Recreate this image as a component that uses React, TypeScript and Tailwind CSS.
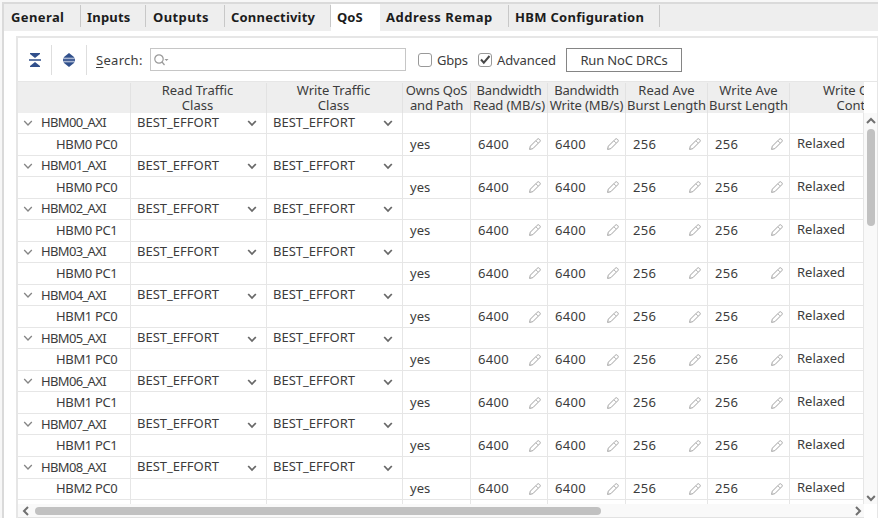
import React from "react";

const COLS = "grid grid-cols-[113px_136px_136px_68px_77px_78px_82px_82px_74px]";

const tabs = [
  { label: "General", cls: "w-[77px] pl-[7px] tracking-[0.4px]" },
  { label: "Inputs", cls: "w-[65px] pl-[6px] tracking-[0.2px]" },
  { label: "Outputs", cls: "w-[79px] pl-[7px] tracking-[0.4px]" },
  { label: "Connectivity", cls: "w-[106px] pl-[6px] tracking-[0.2px]" },
  { label: "QoS", cls: "w-[49px] pl-[6px]", active: true },
  { label: "Address Remap", cls: "w-[129px] pl-[6px] tracking-[0.5px]" },
  { label: "HBM Configuration", cls: "w-[151px] pl-[6px] tracking-[0.3px]" },
];

const groups = [
  ["HBM00_AXI", "HBM0 PC0"],
  ["HBM01_AXI", "HBM0 PC0"],
  ["HBM02_AXI", "HBM0 PC1"],
  ["HBM03_AXI", "HBM0 PC1"],
  ["HBM04_AXI", "HBM1 PC0"],
  ["HBM05_AXI", "HBM1 PC0"],
  ["HBM06_AXI", "HBM1 PC1"],
  ["HBM07_AXI", "HBM1 PC1"],
  ["HBM08_AXI", "HBM2 PC0"],
];

const headers = [
  { top: "", bottom: "", cls: "" },
  { top: "Read Traffic", bottom: "Class", cls: "pr-[2px]" },
  { top: "Write Traffic", bottom: "Class", cls: "pr-[2px]" },
  { top: "Owns QoS", bottom: "and Path", cls: "tracking-[-0.2px]" },
  { top: "Bandwidth", bottom: "Read (MB/s)", cls: "tracking-[-0.1px]" },
  { top: "Bandwidth", bottom: "Write (MB/s)", cls: "tracking-[-0.15px]" },
  { top: "Read Ave", bottom: "Burst Length", cls: "" },
  { top: "Write Ave", bottom: "Burst Length", cls: "" },
];

function Chevron({ className, d = "M1.2 3l3.8 4 3.8-4", w = 2 }: { className: string; d?: string; w?: number }) {
  return (
    <svg viewBox="0 0 10 10" className={`h-[10px] w-[10px] shrink-0 ${className}`} fill="none" stroke="currentColor" strokeWidth={w}>
      <path d={d} />
    </svg>
  );
}

function Pencil() {
  return (
    <svg viewBox="0 0 12 12" className="h-[12px] w-[12px] shrink-0 text-[#a0a0a0]" fill="none" stroke="currentColor" strokeWidth="1" strokeLinejoin="round">
      <path d="M.6 11.4l.7-3.2 6.9-6.9c.7-.7 1.5-.7 2.1-.1l.5.5c.6.6.6 1.4-.1 2.1L3.8 10.7z M7.3 3.2l1.5 1.5" />
    </svg>
  );
}

const cell = "flex items-center border-r border-b border-[#e6e6e6] min-w-0";

function Editable({ value }: { value: string }) {
  return (
    <div className={`${cell} justify-between pl-[7px] pr-[6px]`}>
      <span className="tracking-[0.3px]">{value}</span>
      <Pencil />
    </div>
  );
}

function Traffic() {
  return (
    <div className={`${cell} justify-between pl-[6px] pr-[9px]`}>
      <span className="-mt-[1px]">BEST_EFFORT</span>
      <Chevron className="mt-[1px] text-[#686868]" w={1.8} />
    </div>
  );
}

function Group({ name, child }: { name: string; child: string }) {
  return (
    <>
      <div className={`${COLS} h-[21.54px]`}>
        <div className={`${cell} pl-[5px]`}>
          <Chevron className="text-[#858585]" w={1.3} />
          <span className="ml-[8px] tracking-[-0.65px]">{name}</span>
        </div>
        <Traffic />
        <Traffic />
        <div className={cell} />
        <div className={cell} />
        <div className={cell} />
        <div className={cell} />
        <div className={cell} />
        <div className={cell} />
      </div>
      <div className={`${COLS} h-[21.54px]`}>
        <div className={`${cell} pl-[38px]`}>
          <span className="tracking-[-0.35px]">{child}</span>
        </div>
        <div className={cell} />
        <div className={cell} />
        <div className={`${cell} pl-[7px]`}>yes</div>
        <Editable value="6400" />
        <Editable value="6400" />
        <Editable value="256" />
        <Editable value="256" />
        <div className={`${cell} pl-[7px]`}>
          <span className="-mt-[2px]">Relaxed</span>
        </div>
      </div>
    </>
  );
}

export default function App() {
  return (
    <div className="flex h-[518px] w-[878px] flex-col overflow-hidden bg-[#f7f7f7] pt-[2px] pl-[2px] font-['Noto_Sans','DejaVu_Sans',sans-serif] text-[13px] leading-[15px] whitespace-nowrap text-[#3c3c3c]">
      <div className="flex min-h-0 flex-1 flex-col border-t-2 border-l-2 border-[#dadada] bg-white">
        <nav className="flex h-[27px] shrink-0 bg-[#eeeeee] font-bold text-[#1c1c1c]">
          {tabs.map((t) => (
            <div key={t.label} className={`flex shrink-0 justify-between pt-[1px] ${t.cls} ${t.active ? "bg-white" : ""}`}>
              <span className="pt-[5px]">{t.label}</span>
              {!t.active && <i className="h-[22px] w-px bg-[#c8c8c8]" />}
            </div>
          ))}
        </nav>
        <main className="mt-[5px] ml-[12px] flex min-h-0 flex-1 flex-col border-t-2 border-r border-l-2 border-[#e6e6e6]">
          <div className="flex h-[44px] shrink-0 items-center border-b border-[#e6e6e6]">
            <div className="flex h-[30px] w-[34px] items-center justify-center border-r border-[#dedede]">
              <svg viewBox="0 0 12 14" className="h-[14px] w-[12px]" fill="#304f8b">
                <path d="M1 0h10v1L6 5 1 1zM0 6.2h12v1.6H0zM1 14h10v-1L6 9l-5 4z" />
              </svg>
            </div>
            <div className="flex h-[30px] w-[35px] items-center justify-center border-r border-[#dedede]">
              <svg viewBox="0 0 12 14" className="h-[14px] w-[12px]" fill="#304f8b">
                <path d="M6 0l5 4v1H1V4zM6 14l5-4V9H1v1z" />
                <path d="M0 4.6h12v4.8H0z" fill="#a9b6d2" />
                <path d="M0 6.2h12v1.6H0z" />
              </svg>
            </div>
            <span className="ml-[9px] w-[54px] pt-px tracking-[0.3px]"><u className="underline-offset-2">S</u>earch:</span>
            <div className="flex h-[23px] w-[256px] items-center border border-[#c6c6c6] pl-[3px]">
              <svg viewBox="0 0 15 12" className="h-[12px] w-[15px]" fill="none" stroke="#999" strokeWidth="1.2">
                <circle cx="5" cy="5" r="4.2" />
                <path d="M8 8l2.5 3" />
                <path d="M10.5 5h4l-2 2z" fill="#999" stroke="none" />
              </svg>
            </div>
            <span className="ml-[12px] h-[14px] w-[14px] rounded-[3px] border border-[#999]" />
            <span className="ml-[5px] w-[31px] pt-px tracking-[-0.2px]">Gbps</span>
            <span className="ml-[10px] flex h-[14px] w-[14px] items-center justify-center rounded-[3px] border border-[#999]">
              <svg viewBox="0 0 12 12" className="h-[12px] w-[12px]" fill="none" stroke="#484848" strokeWidth="2">
                <path d="M2 5.5l2.8 3.2L10.5 2" />
              </svg>
            </span>
            <span className="ml-[5px] w-[60px] pt-px tracking-[-0.1px]">Advanced</span>
            <div className="ml-[9px] flex h-[24px] w-[116px] items-center justify-center border border-[#858585] pt-px tracking-[-0.15px]">Run NoC DRCs</div>
          </div>
          <div className="flex h-[422px] shrink-0">
            <div className="flex w-[846px] shrink-0 flex-col overflow-hidden">
              <div className={`${COLS} h-[30.5px] shrink-0 bg-[#eeeeee] pt-px text-center leading-[15px]`}>
                {headers.map((h, i) => (
                  <div key={i} className={`border-r border-[#e2e2e2] ${h.cls}`}>
                    {h.top}
                    <br />
                    {h.bottom}
                  </div>
                ))}
                <div className="w-[138px]">
                  Write Order
                  <br />
                  Control
                </div>
              </div>
              <div className="min-h-0 flex-1 overflow-hidden">
                {groups.map(([n, c]) => (
                  <Group key={n} name={n} child={c} />
                ))}
                <div className={`${COLS} h-[22px]`}>
                  {Array.from({ length: 9 }, (_, i) => (
                    <div key={i} className={cell} />
                  ))}
                </div>
              </div>
            </div>
            <div className="mt-[31px] flex w-[13px] flex-col items-center bg-[#f9f9f9] pt-[3px] pb-[1px] text-[#707070]">
              <Chevron className="" d="M1 7l4-4 4 4" />
              <div className="mt-[3px] h-[97px] w-[8px] rounded-full bg-[#c1c1c1]" />
              <Chevron className="mt-auto" />
            </div>
          </div>
          <div className="flex h-[14px] w-[846px] shrink-0 items-center border-b border-[#e2e2e2] bg-[#f9f9f9] pr-[1px] pl-[3px] text-[#707070]">
            <Chevron className="" d="M7 1L3 5l4 4" />
            <div className="ml-[4px] h-[8px] w-[566px] rounded-full bg-[#c1c1c1]" />
            <Chevron className="ml-auto" d="M3 1l4 4-4 4" />
          </div>
        </main>
      </div>
    </div>
  );
}
